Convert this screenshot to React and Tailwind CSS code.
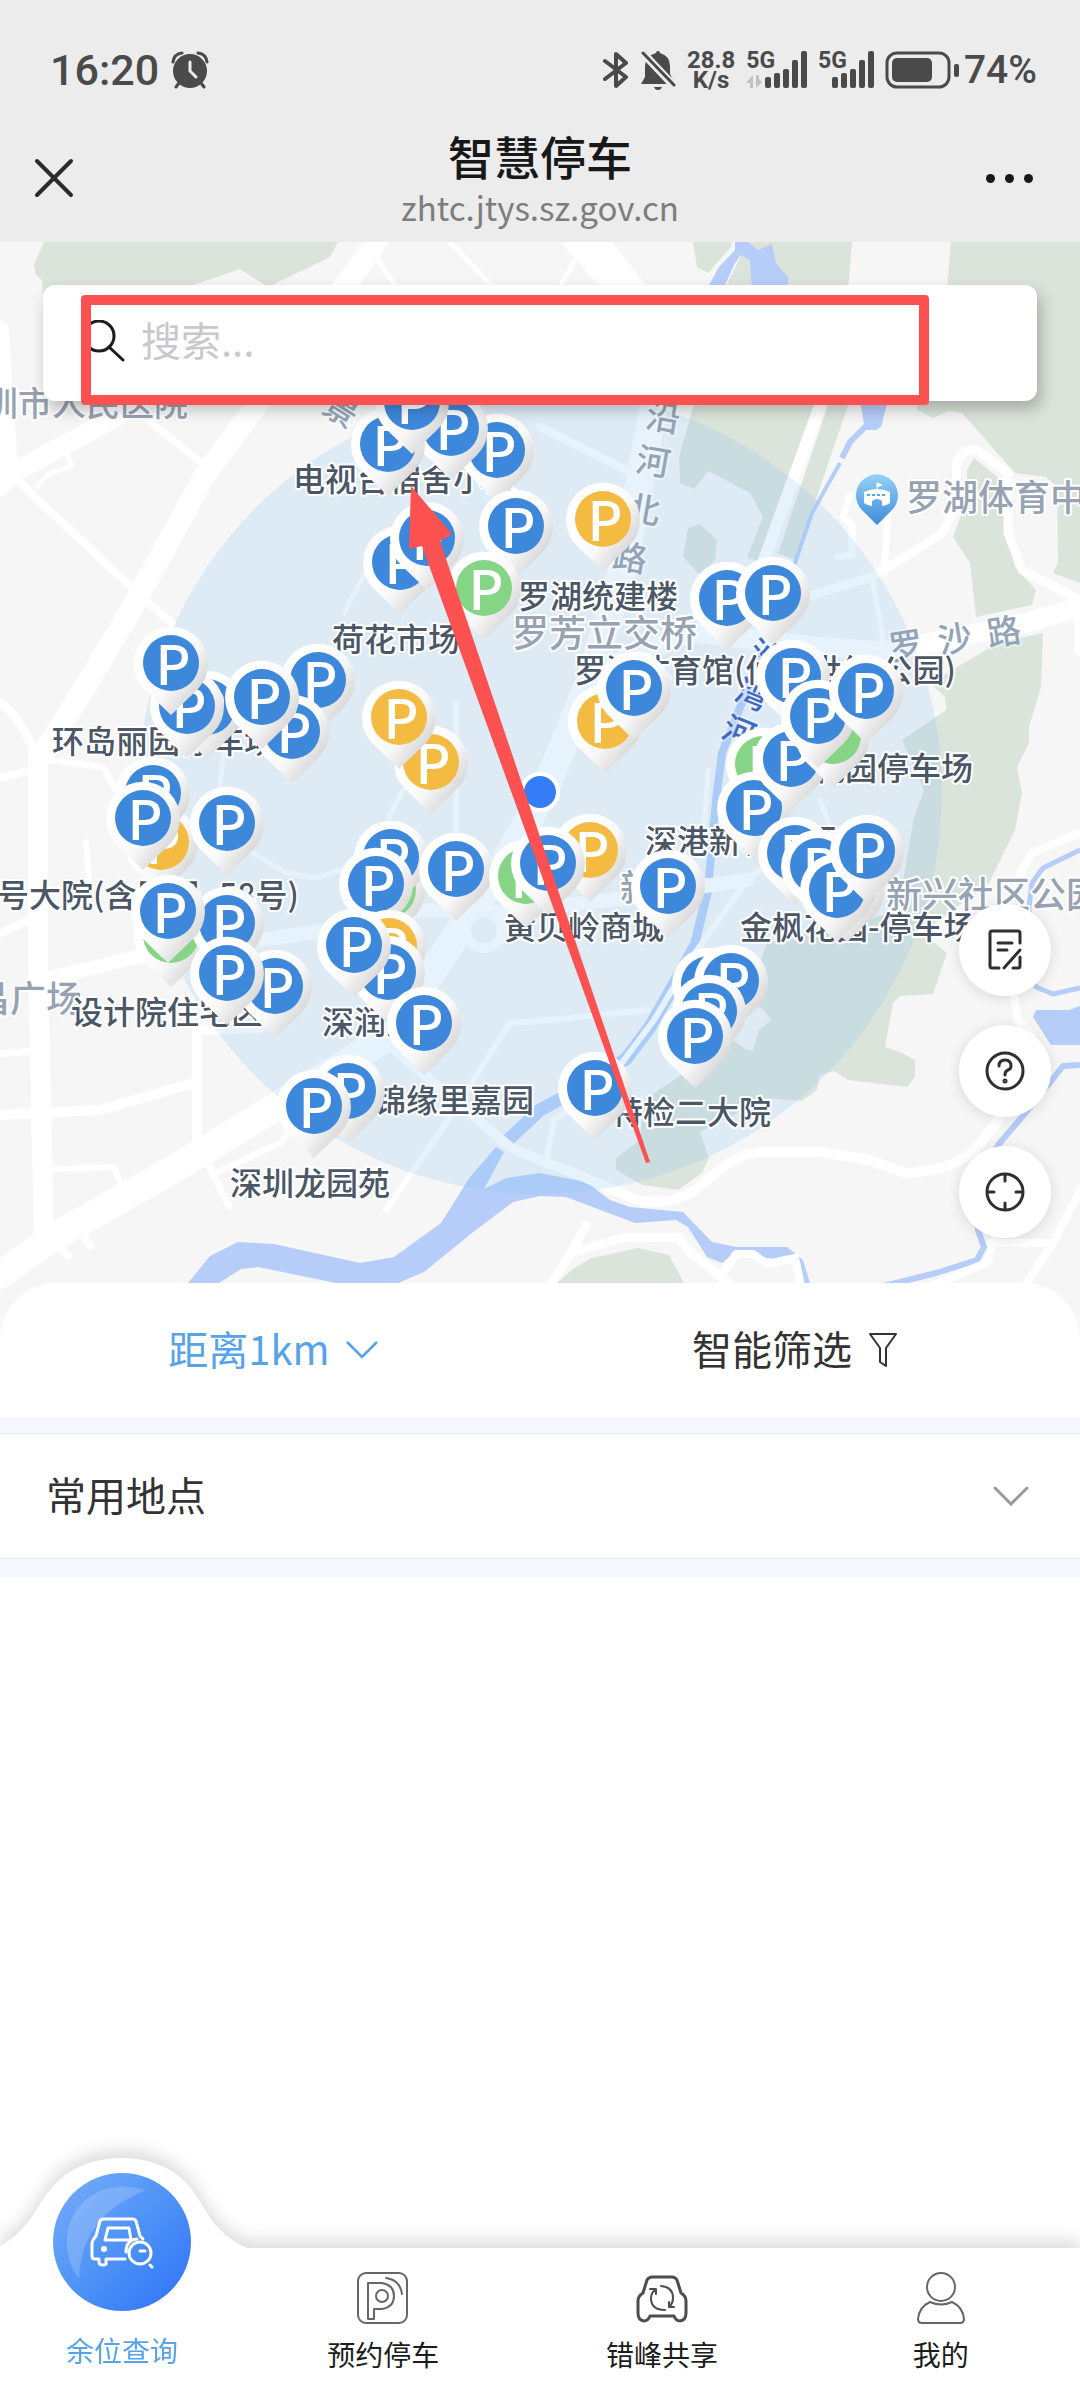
// src/App.jsx
import React, { useState } from "react";

const PIN_COLORS = {
  blue: "#3e88db",
  yellow: "#f3bb41",
  green: "#86d587",
};

// Later entries are drawn over earlier ones
const parkingLots = [
  { x: 497, y: 450, color: "blue" },
  { x: 451, y: 428, color: "blue" },
  { x: 388, y: 444, color: "blue" },
  { x: 412, y: 402, color: "blue" },
  { x: 516, y: 526, color: "blue" },
  { x: 400, y: 562, color: "blue" },
  { x: 427, y: 538, color: "blue" },
  { x: 484, y: 588, color: "green" },
  { x: 603, y: 519, color: "yellow" },
  { x: 727, y: 598, color: "blue" },
  { x: 773, y: 593, color: "blue" },
  { x: 207, y: 707, color: "blue" },
  { x: 187, y: 706, color: "blue" },
  { x: 171, y: 663, color: "blue" },
  { x: 318, y: 680, color: "blue" },
  { x: 292, y: 731, color: "blue" },
  { x: 262, y: 697, color: "blue" },
  { x: 431, y: 762, color: "yellow" },
  { x: 399, y: 717, color: "yellow" },
  { x: 161, y: 842, color: "yellow" },
  { x: 153, y: 793, color: "blue" },
  { x: 143, y: 818, color: "blue" },
  { x: 227, y: 823, color: "blue" },
  { x: 171, y: 935, color: "green" },
  { x: 227, y: 923, color: "blue" },
  { x: 168, y: 911, color: "blue" },
  { x: 275, y: 986, color: "blue" },
  { x: 227, y: 973, color: "blue" },
  { x: 388, y: 890, color: "green" },
  { x: 391, y: 857, color: "blue" },
  { x: 376, y: 884, color: "blue" },
  { x: 456, y: 869, color: "blue" },
  { x: 526, y: 876, color: "green" },
  { x: 590, y: 850, color: "yellow" },
  { x: 548, y: 863, color: "blue" },
  { x: 389, y: 946, color: "yellow" },
  { x: 388, y: 972, color: "blue" },
  { x: 354, y: 945, color: "blue" },
  { x: 424, y: 1023, color: "blue" },
  { x: 605, y: 721, color: "yellow" },
  { x: 634, y: 688, color: "blue" },
  { x: 668, y: 886, color: "blue" },
  { x: 793, y: 676, color: "blue" },
  { x: 763, y: 764, color: "green" },
  { x: 754, y: 808, color: "blue" },
  { x: 791, y: 759, color: "blue" },
  { x: 833, y: 736, color: "green" },
  { x: 818, y: 716, color: "blue" },
  { x: 866, y: 691, color: "blue" },
  { x: 795, y: 853, color: "blue" },
  { x: 818, y: 866, color: "blue" },
  { x: 847, y: 890, color: "green" },
  { x: 837, y: 890, color: "blue" },
  { x: 867, y: 851, color: "blue" },
  { x: 709, y: 984, color: "blue" },
  { x: 731, y: 981, color: "blue" },
  { x: 709, y: 1011, color: "blue" },
  { x: 695, y: 1036, color: "blue" },
  { x: 595, y: 1088, color: "blue" },
  { x: 348, y: 1091, color: "blue" },
  { x: 314, y: 1106, color: "blue" },
];

const lotLabels = [
  { x: 293, y: 491, text: "电视台宿舍小区" },
  { x: 518, y: 608, text: "罗湖统建楼" },
  { x: 332, y: 651, text: "荷花市场" },
  { x: 574, y: 682, text: "罗湖体育馆(仙湖世纪 公园)" },
  { x: 813, y: 780, text: "花园停车场" },
  { x: 645, y: 853, text: "深港新村小区" },
  { x: 52, y: 753, text: "环岛丽园停车场" },
  { x: -3, y: 907, text: "号大院(含民居 -58号)" },
  { x: 71, y: 1024, text: "设计院住宅区" },
  { x: 322, y: 1034, text: "深润大厦" },
  { x: 374, y: 1112, text: "锦缘里嘉园" },
  { x: 230, y: 1195, text: "深圳龙园苑" },
  { x: 611, y: 1124, text: "特检二大院" },
  { x: 504, y: 939, text: "黄贝岭商城" },
  { x: 740, y: 939, text: "金枫花园-停车场" },
];

const placeLabels = [
  { x: -50, y: 416, size: 34, text: "深圳市人民医院" },
  { x: 512, y: 647, size: 37, text: "罗芳立交桥" },
  { x: 906, y: 511, size: 36, text: "罗湖体育中心" },
  { x: 886, y: 908, size: 36, text: "新兴社区公园" },
  { x: -26, y: 1012, size: 36, text: "昌广场" },
  { x: 620, y: 901, size: 36, text: "新秀" },
];

// Street names are set one character at a time along the road
const streetChars = [
  { x: 663, y: 418, rotate: 10, char: "沿" },
  { x: 653, y: 462, rotate: 10, char: "河" },
  { x: 643, y: 510, rotate: 10, char: "北" },
  { x: 630, y: 558, rotate: 10, char: "路" },
  { x: 906, y: 646, rotate: -9, char: "罗" },
  { x: 955, y: 639, rotate: -9, char: "沙" },
  { x: 1004, y: 632, rotate: -9, char: "路" },
  { x: 341, y: 410, rotate: 32, char: "景" },
];

const riverChars = [
  { x: 766, y: 655, rotate: 22, char: "沙" },
  { x: 752, y: 694, rotate: 22, char: "湾" },
  { x: 739, y: 731, rotate: 22, char: "河" },
];

const greens = [
  "44,242 34,265 36,275 42,280 44,310 190,286 240,269 268,287 330,257 338,242",
  "693,242 697,267 708,273 731,247 732,242",
  "748,242 852,242 848,290 724,290",
  "951,242 946,300 917,400 917,410 933,418 948,411 962,413 1015,473 1046,477 1057,487 1058,563 1053,573 1080,583 1080,242",
  "974,458 967,470 967,500 953,537 970,563 976,617 1032,605 1036,590 1015,567 1005,513 1001,480",
  "695,400 679,457 680,483 694,489 708,471 750,493 763,517 747,557 760,562 822,400",
  "850,400 830,400 778,553 795,560",
  "700,524 717,540 715,560 700,575 683,557 688,528",
  "930,683 998,643 1043,633 1041,687 1029,727 1029,743 1017,767 1022,793 1015,830 989,883 922,933 947,953 933,994 900,996 893,1003 885,1047 902,1053 915,1060 915,1077 907,1087 848,1080 834,1071 820,1075 817,1090 802,1101 767,1098 700,1132 709,1158 702,1173 678,1190 642,1185 616,1170 616,1158 640,1140 643,1107 654,1093 678,1077 733,1040 747,1050 753,1050 759,1030 771,1020 764,1010 747,1000 757,970 767,943 905,910 902,887 914,817 924,790 902,740 946,710 945,697",
  "574,1268 592,1258 638,1248 669,1255 684,1283 557,1283",
];

const lakes = [
  "709,285 719,267 735,250 735,242 748,242 758,250 772,244 776,263 788,277 788,290 752,290 750,260 741,255 735,263 724,287",
  "860,400 888,400 881,427 876,430 865,430",
  "188,1283 210,1256 238,1242 274,1244 360,1263 394,1257 441,1223 470,1177 496,1147 504,1152 484,1189 506,1178 540,1173 586,1182 610,1200 630,1207 683,1212 712,1242 736,1247 787,1247 803,1260 810,1283 804,1283 800,1262 760,1257 735,1252 722,1263 707,1257 688,1227 676,1220 635,1223 566,1197 540,1196 513,1202 472,1233 424,1272 398,1283 336,1283 258,1267 241,1269 219,1283",
  "1036,1010 1069,1010 1080,1006 1080,1045 1051,1045 1033,1017",
];

const streams = [
  { d: "M506 1142L540 1110L590 1083L626 1059L650 1027L674 985", w: 13 },
  { d: "M665 997L695 943L709 885", w: 9 },
  { d: "M709 878L716 800L722 753L743 700L755 672", w: 8 },
  { d: "M755 672L780 610L796 560L812 513L840 463", w: 4 },
  { d: "M842 458L850 442L868 424", w: 6 },
  { d: "M1080 850L1043 868L1032 883L1029 907V970L1036 987L1053 994L1080 988", w: 5 },
  { d: "M1080 1065L1063 1066L1052 1080L1022 1117L998 1145L975 1190L978 1230L984 1247L977 1260L936 1273L884 1286", w: 6 },
];

const roads = [
  { d: "M395 215L360 265L255 407L205 475L131 610L79 697L41 757", w: 22 },
  { d: "M38 755L38 960L44 1240", w: 20 },
  { d: "M0 1275L52 1238L186 1162L275 1107L389 1036L440 960L500 870L545 790L590 680L625 560L655 400", w: 28 },
  { d: "M0 330L9 470", w: 18 },
  { d: "M-5 490L18 470L120 415", w: 20 },
  { d: "M17 480L134 590L172 623", w: 8 },
  { d: "M148 420L207 467", w: 7 },
  { d: "M37 487L48 474L72 466L66 452", w: 5 },
  { d: "M0 702Q22 720 36 755", w: 9 },
  { d: "M0 778L30 770", w: 8 },
  { d: "M48 760L103 767L116 790", w: 6 },
  { d: "M86 842L89 878", w: 6 },
  { d: "M0 933L34 918", w: 8 },
  { d: "M34 982L145 955L310 933L424 910L500 912L610 900L747 880", w: 14 },
  { d: "M197 1027V1155M197 1030L260 1028", w: 10 },
  { d: "M0 1115L100 1110L190 1084", w: 10 },
  { d: "M0 1054L34 1051", w: 7 },
  { d: "M55 1169L114 1167L121 1184", w: 6 },
  { d: "M205 1158L229 1206", w: 7 },
  { d: "M213 1174L282 1142L290 1128", w: 6 },
  { d: "M60 1248L68 1256M82 1232L90 1246", w: 8 },
  { d: "M386 1210L448 1120L510 1023L551 1020L647 1010", w: 6 },
  { d: "M389 1045L510 1147L540 1160L574 1173L640 1201Q680 1206 705 1182Q738 1152 760 1152H822L870 1160L905 1173Q950 1172 975 1150L998 1120", w: 10 },
  { d: "M547 1157L554 1120L609 1080L654 1020L690 960L747 880L800 840", w: 6 },
  { d: "M540 427L626 470", w: 9 },
  { d: "M822 400L764 560L745 620", w: 12 },
  { d: "M574 262L560 286", w: 5 },
  { d: "M450 242L492 286M378 260L398 290", w: 5 },
  { d: "M1090 604L1022 624L884 652L802 645L690 632L600 670", w: 20 },
  { d: "M802 598L872 577L940 535L955 510L957 462Q962 448 977 450L1008 473V533L1022 570L1080 600", w: 9 },
  { d: "M884 573L888 513M850 495L843 517L852 525V555L838 557", w: 7 },
  { d: "M872 577L884 645", w: 5 },
  { d: "M1080 833L1032 853L1015 883L1010 900", w: 8 },
  { d: "M1080 600V650", w: 12 },
  { d: "M1013 990L1018 1020L1032 1036", w: 8 },
  { d: "M1080 1190L1053 1243L1025 1286M990 1243H1050M994 1240L988 1262L932 1286", w: 8 },
  { d: "M550 1285L571 1253L622 1238L678 1237L691 1253L735 1288M571 1253L586 1225", w: 9 },
  { d: "M722 1275L736 1254H753L767 1264L795 1258L801 1286", w: 8 },
  { d: "M365 573L344 613M456 703V830M224 747L220 787L232 840L286 873L317 878L348 867M403 790L389 817M708 770L704 830M820 800L835 840", w: 5 },
];

// ---------- Map ----------

const ParkingPin = ({ x, y, color }) => (
  <g transform={`translate(${x} ${y})`}>
    <path d="M0 52L-26 27A37 37 0 1 1 26 27Z" fill="url(#pinBody)" />
    <circle r="28" fill={PIN_COLORS[color]} />
    <text x="2" y="22" textAnchor="middle" fontSize="54" fontWeight="500" fill="#fff">
      P
    </text>
  </g>
);

const ParkingMap = () => (
  <svg
    viewBox="0 242 1080 1101"
    className="block w-full bg-[#f6f6f6] font-['Noto_Sans_CJK_SC',sans-serif]"
    role="img"
    aria-label="停车场地图"
  >
    <defs>
      <linearGradient id="pinBody" x1="0.3" y1="0.4" x2="0.9" y2="0.9">
        <stop offset="0" stopColor="#fff" />
        <stop offset="0.4" stopColor="#f8f8f8" />
        <stop offset="1" stopColor="#cbcbcb" />
      </linearGradient>
      <linearGradient id="poiBody" x1="0" y1="0" x2="0" y2="1">
        <stop offset="0" stopColor="#93d1f6" />
        <stop offset="1" stopColor="#3f8bdc" />
      </linearGradient>
    </defs>

    {greens.map((points) => (
      <polygon key={points} points={points} fill="#dbe4db" />
    ))}
    <polygon points="561,242 612,242 650,290 602,290" fill="#fff" />
    {lakes.map((points) => (
      <polygon key={points} points={points} fill="#b6cdf9" />
    ))}
    {streams.map(({ d, w }) => (
      <path key={d} d={d} fill="none" stroke="#b6cdf9" strokeWidth={w} strokeLinejoin="round" />
    ))}
    {roads.map(({ d, w }) => (
      <path
        key={d}
        d={d}
        fill="none"
        stroke="#fff"
        strokeWidth={w}
        strokeLinejoin="round"
        strokeLinecap="round"
      />
    ))}
    <circle cx="484" cy="930" r="18" fill="#f6f6f6" stroke="#fff" strokeWidth="10" />

    {/* Search radius */}
    <circle cx="540" cy="792" r="402" fill="#82c3f7" fillOpacity="0.2" />

    <g stroke="#fff" strokeWidth="4" strokeLinejoin="round" paintOrder="stroke" fontWeight="500">
      <g fill="#97a3b2">
        {placeLabels.map(({ x, y, size, text }) => (
          <text key={text} x={x} y={y} fontSize={size}>
            {text}
          </text>
        ))}
      </g>
      <g fill="#93a4b7" fontSize="34" textAnchor="middle" strokeOpacity="0.4">
        {streetChars.map(({ x, y, rotate, char }) => (
          <text key={`${char}${x}`} transform={`translate(${x} ${y}) rotate(${rotate})`} y="12">
            {char}
          </text>
        ))}
      </g>
      <g fill="#4169c2" fontSize="32" textAnchor="middle" strokeOpacity="0.4">
        {riverChars.map(({ x, y, rotate, char }) => (
          <text key={char} transform={`translate(${x} ${y}) rotate(${rotate})`} y="12">
            {char}
          </text>
        ))}
      </g>
      <g fill="#4b5666" fontSize="32">
        {lotLabels.map(({ x, y, text }) => (
          <text key={text} x={x} y={y}>
            {text}
          </text>
        ))}
      </g>
    </g>

    {/* Stadium marker */}
    <g transform="translate(877 495)">
      <path d="M0 30L-15 15A21 21 0 1 1 15 15Z" fill="url(#poiBody)" />
      <path d="M-13 -3Q0 -9 13 -3V8Q9 11 5 11V6Q0 2 -5 6V11Q-9 11 -13 8Z" fill="#fff" />
      <path d="M0 -6V-12L5 -10L0 -8" fill="#fff" stroke="#fff" strokeWidth="1" />
      <path d="M-10 0L10 0" stroke="#5aa9e6" strokeWidth="2" strokeDasharray="3 2" />
    </g>

    {parkingLots.map((lot) => (
      <ParkingPin key={`${lot.x}-${lot.y}`} {...lot} />
    ))}

    {/* Current position */}
    <circle cx="540" cy="792" r="18" fill="#357cf7" stroke="#fff" strokeWidth="4" />

    {/* Hint arrow towards the search box */}
    <polygon points="411,486 452,534 440,541 650,1162 646,1163 422,546 409,549" fill="#fb5151" />
  </svg>
);

const SearchBox = () => {
  const [keyword, setKeyword] = useState("");

  return (
    <div className="absolute inset-x-[43px] top-[43px]">
      <label className="flex h-[116px] items-center rounded-xl bg-white pb-1 pl-10 pr-6 shadow-[4px_8px_16px_rgba(0,0,0,0.25)]">
        <span className="sr-only">搜索</span>
        <svg className="size-[42px] shrink-0" viewBox="0 0 42 42" fill="none" stroke="#1c1c1c" strokeWidth="3">
          <circle cx="16" cy="16" r="15" />
          <path d="M26 27L40 40" strokeLinecap="round" />
        </svg>
        <input
          type="search"
          value={keyword}
          onChange={(e) => setKeyword(e.target.value)}
          placeholder="搜索..."
          className="ml-4 min-w-0 flex-1 bg-transparent pb-1 text-[40px] text-gray-800 outline-none placeholder:text-[#c8c9cc]"
        />
      </label>
      <div className="pointer-events-none absolute -bottom-1 left-[38px] right-[108px] top-[10px] rounded-sm border-10 border-[#fb5151]" />
    </div>
  );
};

const MapButton = ({ label, children }) => (
  <button
    type="button"
    aria-label={label}
    className="flex size-[92px] items-center justify-center rounded-full bg-white shadow-[0_2px_14px_rgba(0,0,0,0.12)]"
  >
    <svg
      className="size-[42px]"
      viewBox="0 0 42 42"
      fill="none"
      stroke="#2f2f2f"
      strokeWidth="3"
      strokeLinecap="round"
      strokeLinejoin="round"
    >
      {children}
    </svg>
  </button>
);

const MapButtons = () => (
  <div className="absolute right-[29px] top-[662px] flex flex-col gap-[29px]">
    <MapButton label="反馈">
      <path d="M36 14V4Q36 2 34 2H8Q6 2 6 4V37Q6 39 8 39H15M29 39H34Q36 39 36 37V28" />
      <path d="M14 14H28M14 21H23M36 21L20 39" />
    </MapButton>
    <MapButton label="帮助">
      <circle cx="21" cy="21" r="18" />
      <path d="M15 16Q15 10 21 10T27 16Q27 19 24 20T21 25" />
      <circle cx="21" cy="31" r="1" />
    </MapButton>
    <MapButton label="定位">
      <circle cx="21" cy="21" r="18" />
      <path d="M21 4V10M21 32V38M4 21H10M32 21H38" />
    </MapButton>
  </div>
);

// ---------- Header ----------

const SignalBars = () => (
  <svg className="h-[38px] w-[42px]" viewBox="0 0 42 38" fill="currentColor">
    <rect x="0" y="26" width="6" height="11" rx="2" />
    <rect x="9" y="22" width="6" height="15" rx="2" />
    <rect x="18" y="18" width="6" height="19" rx="2" />
    <rect x="27" y="9" width="6" height="28" rx="2" />
    <rect x="36" y="0" width="6" height="37" rx="2" />
  </svg>
);

const StatusBar = () => (
  <div className="flex h-[124px] items-center justify-between pl-[50px] pr-[43px] pt-4 font-[Roboto,sans-serif] text-[#4a4a4a]">
    <div className="flex items-center gap-3">
      <span className="text-[43px] font-medium">16:20</span>
      <svg className="size-[38px]" viewBox="0 0 38 38" fill="currentColor">
        <circle cx="19" cy="20" r="17" />
        <path d="M2 11Q3 3 11 2M36 11Q35 3 27 2M8 32L5 36M30 32L33 36" stroke="currentColor" strokeWidth="3" strokeLinecap="round" fill="none" />
        <path d="M19 11V20L25 26" stroke="#ececec" strokeWidth="3" strokeLinecap="round" fill="none" />
      </svg>
    </div>

    <div className="flex items-center gap-[11px]">
      <svg className="h-[38px] w-[26px]" viewBox="0 0 26 38" fill="none" stroke="currentColor" strokeWidth="4" strokeLinejoin="round" strokeLinecap="round">
        <path d="M2 10L23 26L13 35V3L23 12L2 28" />
      </svg>
      <svg className="h-[40px] w-[36px]" viewBox="0 0 36 40" fill="currentColor">
        <path d="M18 1Q20 1 20 3Q30 6 30 16V24L35 34H1L5 27V16Q5 6 16 3Q16 1 18 1ZM14 37H22Q21 40 18 40T14 37Z" />
        <path d="M0 0L36 38" stroke="#ececec" strokeWidth="8" />
        <path d="M3 3L34 35" stroke="currentColor" strokeWidth="3" strokeLinecap="round" />
      </svg>
      <div className="text-center text-2xl font-bold leading-5">
        <div>28.8</div>
        <div>K/s</div>
      </div>
      <div className="relative flex items-start">
        <span className="text-[23px] font-bold leading-5">5G</span>
        <svg className="absolute bottom-0 left-0 h-[14px] w-4 text-[#c2c2c2]" viewBox="0 0 16 14" fill="currentColor">
          <path d="M7 0V13H4V8H0ZM10 0V13L16 7L13 4V0Z" />
        </svg>
        <div className="-ml-[10px]">
          <SignalBars />
        </div>
      </div>
      <div className="flex items-start">
        <span className="text-[23px] font-bold leading-5">5G</span>
        <div className="-ml-[15px]">
          <SignalBars />
        </div>
      </div>
      <div className="flex items-center gap-1">
        <svg className="h-[38px] w-[75px]" viewBox="0 0 75 38">
          <rect x="2" y="2" width="62" height="34" rx="10" fill="none" stroke="currentColor" strokeWidth="3" />
          <rect x="7" y="7" width="40" height="24" rx="5" fill="currentColor" />
          <rect x="69" y="13" width="5" height="13" rx="2" fill="currentColor" />
        </svg>
        <span className="text-[39px] font-medium">74%</span>
      </div>
    </div>
  </div>
);

const TitleBar = () => (
  <div className="flex h-[118px] items-center justify-between px-[34px] pb-[10px]">
    <button type="button" aria-label="关闭" className="w-[60px]">
      <svg className="size-10" viewBox="0 0 40 40" stroke="#2b2b2b" strokeWidth="4" strokeLinecap="round">
        <path d="M3 3L37 37M37 3L3 37" />
      </svg>
    </button>
    <div className="text-center">
      <h1 className="text-[46px] font-medium leading-[58px] text-[#181818]">智慧停车</h1>
      <p className="text-[33px] leading-[46px] text-[#7d7d7d]">zhtc.jtys.sz.gov.cn</p>
    </div>
    <button type="button" aria-label="更多" className="flex w-[60px] justify-start gap-[10px]">
      <span className="size-[9px] rounded-full bg-[#181818]" />
      <span className="size-[9px] rounded-full bg-[#181818]" />
      <span className="size-[9px] rounded-full bg-[#181818]" />
    </button>
  </div>
);

// ---------- List panel ----------

const Chevron = ({ className }) => (
  <svg className={className} viewBox="0 0 36 20" fill="none" stroke="currentColor" strokeWidth="3" strokeLinecap="round">
    <path d="M2 2L18 18L34 2" />
  </svg>
);

const ResultPanel = () => (
  <main className="relative -mt-[60px] flex-1 rounded-t-[56px] bg-white">
    <div className="flex h-[134px] items-center px-3 pb-1 text-[40px]">
      <button type="button" className="flex flex-1 items-center justify-center gap-4 text-[#56a3ea]">
        距离1km
        <Chevron className="mt-1 w-8" />
      </button>
      <button type="button" className="flex flex-1 items-center justify-center gap-4 pr-3 text-[#333]">
        智能筛选
        <svg className="mt-1 h-[36px] w-[30px]" viewBox="0 0 30 36" fill="none" stroke="currentColor" strokeWidth="2" strokeLinejoin="round">
          <path d="M2 2H28L18 16V34L12 30V16Z" />
        </svg>
      </button>
    </div>
    <div className="h-4 bg-[#f5f8fe]" />
    <button
      type="button"
      className="flex h-[126px] w-full items-center justify-between border-y border-[#ebebeb] pb-1 pl-[46px] pr-[51px] text-[40px] text-[#333]"
    >
      常用地点
      <Chevron className="mt-1 w-9 text-[#999]" />
    </button>
    <div className="h-[18px] bg-[#f5f8fe]" />
  </main>
);

// ---------- Bottom navigation ----------

const NavItem = ({ label, children }) => (
  <a href="#" className="flex flex-1 flex-col items-center pt-[23px] text-[28px] leading-[42px] text-[#1c1c1c]">
    <svg
      className="mb-2 size-[54px]"
      viewBox="0 0 54 54"
      fill="none"
      stroke="#666"
      strokeWidth="2"
      strokeLinejoin="round"
      strokeLinecap="round"
    >
      {children}
    </svg>
    {label}
  </a>
);

const BottomNav = () => (
  <nav className="relative flex h-[139px] bg-white drop-shadow-[0_-8px_8px_rgba(0,0,0,0.13)]">
    <svg className="absolute -top-[90px] left-0 h-[92px] w-[247px]" viewBox="0 0 247 92">
      <path
        d="M0 88C30 72 38 45 50 32C68 9 95 0 122 0C149 0 174 9 191 30C206 50 212 74 247 90V92H0Z"
        fill="#fff"
      />
    </svg>
    <a href="#" className="relative -mt-[75px] flex w-[244px] flex-col items-center text-[28px] leading-[42px] text-[#56a3ea]">
      <svg className="mb-[18px] size-[138px]" viewBox="0 0 138 138">
        <defs>
          <linearGradient id="navCircle" x1="0.1" y1="0.1" x2="0.85" y2="0.85">
            <stop offset="0" stopColor="#6fa8f8" />
            <stop offset="0.55" stopColor="#4e92f7" />
            <stop offset="1" stopColor="#387bf8" />
          </linearGradient>
        </defs>
        <circle cx="69" cy="69" r="69" fill="url(#navCircle)" />
        <path d="M26 106C-6 62 28 -2 93 17C52 34 28 60 26 106Z" fill="#fff" fillOpacity="0.18" />
        <g fill="none" stroke="#fff" strokeWidth="3" strokeLinejoin="round" strokeLinecap="round">
          <path d="M90 66L87 63L83 48Q82 46 80 46H51Q48 46 47 48L43 63Q39 67 39 71V83Q39 86 42 86H46V89Q46 92 50 92T53 89V86H72" />
          <path d="M55 55H76L78 67H52Z" />
          <circle cx="87" cy="80" r="11" />
          <path d="M73 79Q73 67 84 66M87 78H92M97 92L99 94" />
        </g>
        <circle cx="51" cy="76" r="3" fill="#fff" />
      </svg>
      余位查询
    </a>
    <NavItem label="预约停车">
      <rect x="2" y="2" width="49" height="50" rx="8" />
      <path d="M12 12H26Q38 14 38 25T26 38H18V48H12Z" />
      <circle cx="26" cy="25" r="6" />
      <path d="M30 7Q44 9 46 23" />
    </NavItem>
    <NavItem label="错峰共享">
      <g stroke="#4d4d4d" strokeWidth="3">
        <path d="M17 6H37Q40 6 42 9L46 22Q51 25 51 30V42Q51 49 45 50Q41 50 39 45H15Q13 50 9 50Q3 49 3 42V30Q3 25 8 22L12 9Q14 6 17 6Z" />
        <path d="M26 15Q38 16 38 27Q38 32 35 35M30 39Q16 39 16 27Q16 22 20 19M15 18H21V23M39 36H34V31" strokeWidth="2" />
      </g>
    </NavItem>
    <NavItem label="我的">
      <circle cx="27" cy="16" r="14" />
      <path d="M16 31Q27 36 38 31Q49 36 50 48Q50 52 46 52H8Q4 52 4 48Q5 36 16 31Z" />
    </NavItem>
  </nav>
);

const App = () => {
  return (
    <div className="flex min-h-screen flex-col overflow-hidden bg-white font-['Noto_Sans_CJK_SC',sans-serif]">
      <header className="bg-[#ececec]">
        <StatusBar />
        <TitleBar />
      </header>
      <section className="relative">
        <ParkingMap />
        <SearchBox />
        <MapButtons />
      </section>
      <ResultPanel />
      <BottomNav />
    </div>
  );
};

export default App;
